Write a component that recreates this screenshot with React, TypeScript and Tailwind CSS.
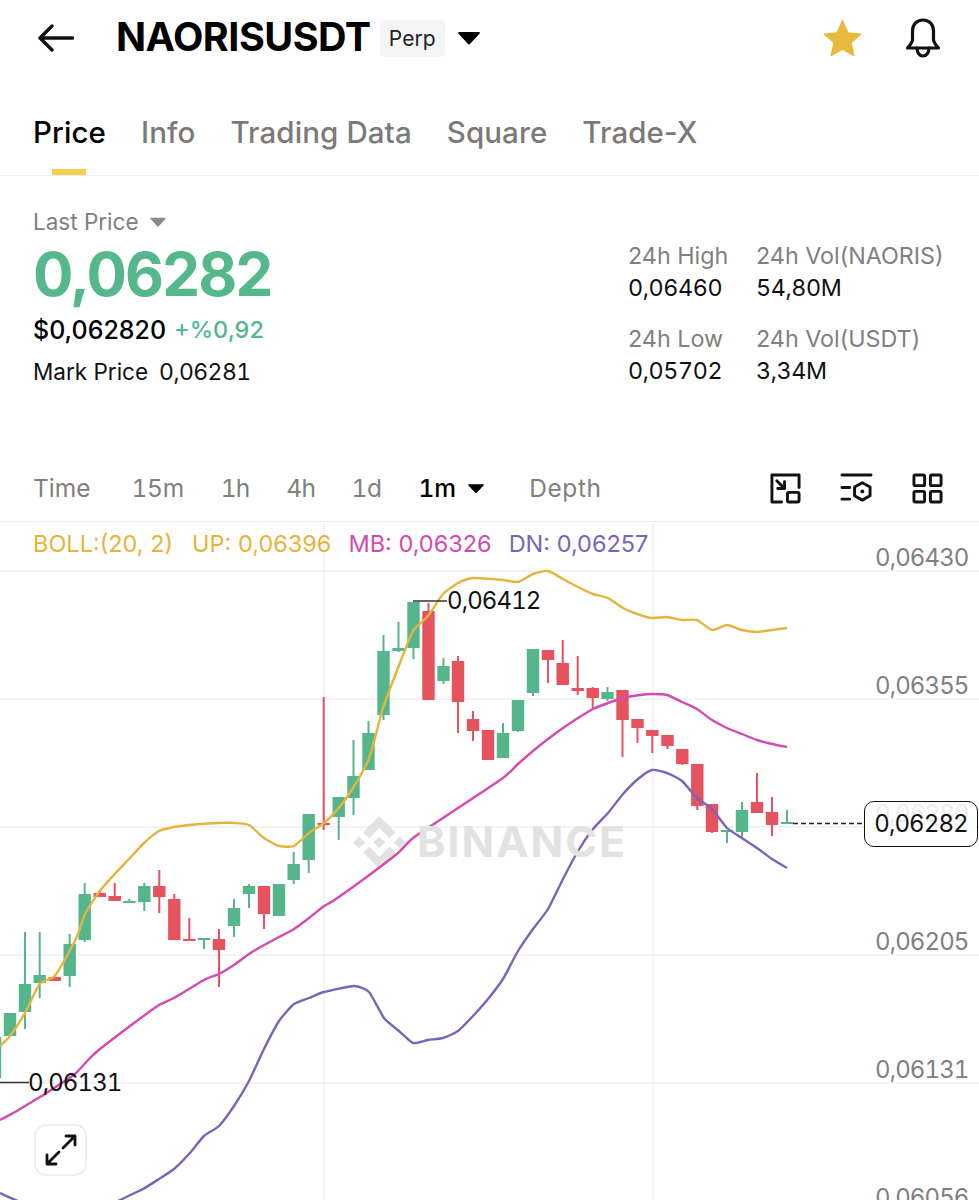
import React from 'react'

// ─── Chart data (page-pixel coordinates, the svg viewBox starts at y=521) ─────
type Candle = [x: number, up: boolean, wickTop: number, wickBottom: number, bodyTop: number, bodyBottom: number]

const candles: Candle[] = [
  [-5, true, 1036, 1077, 1036, 1077],
  [10, true, 1012, 1035, 1012, 1035],
  [25, true, 931, 1028, 983, 1011],
  [39.7, true, 931, 997, 974, 982],
  [54.7, false, 976, 980, 976, 980],
  [69.7, true, 933, 986, 943, 975],
  [84.7, true, 882, 941, 893, 939],
  [99.7, false, 890, 896, 892, 896],
  [114.7, false, 882, 900, 895, 900],
  [129.3, true, 898, 902, 900, 902],
  [144.3, true, 882, 910, 885, 901],
  [159.3, false, 869, 912, 885, 896],
  [174.3, false, 893, 939, 898, 939],
  [189.3, false, 917, 940, 938, 940],
  [204, true, 937, 948, 937, 939],
  [219, false, 928, 986, 938, 949],
  [234, true, 898, 936, 907, 925],
  [249, true, 883, 907, 885, 893],
  [264, false, 885, 928, 885, 913],
  [279, true, 883, 915, 883, 915],
  [293.7, true, 851, 883, 863, 879],
  [308.7, true, 813, 872, 813, 859],
  [323.7, false, 696, 829, 822, 824],
  [338.7, true, 796, 839, 796, 816],
  [353.5, true, 739, 814, 775, 797],
  [368.5, true, 720, 769, 732, 769],
  [383.5, true, 634, 719, 650, 714],
  [398.5, true, 621, 651, 647, 650],
  [413.5, true, 601, 658, 601, 647],
  [428.5, false, 602, 699, 610, 699],
  [443.5, true, 657, 683, 665, 680],
  [458, false, 655, 732, 660, 701],
  [473, false, 710, 740, 718, 730],
  [488, false, 729, 759, 729, 759],
  [503, true, 722, 757, 732, 757],
  [518, true, 699, 731, 699, 730],
  [533, true, 648, 695, 648, 692],
  [548, false, 649, 682, 649, 659],
  [562.7, false, 639, 684, 662, 684],
  [577.7, false, 655, 694, 687, 690],
  [592.7, false, 686, 708, 687, 697],
  [607.5, true, 686, 700, 691, 698],
  [622.5, false, 689, 756, 689, 719],
  [637.5, false, 718, 742, 718, 727],
  [652.3, false, 729, 752, 729, 735],
  [667.5, false, 734, 748, 734, 745],
  [682.3, false, 748, 764, 748, 763],
  [697.3, false, 763, 809, 763, 805],
  [712, false, 803, 832, 803, 831],
  [727, true, 829, 842, 829, 831],
  [742, true, 801, 837, 809, 831],
  [757, false, 772, 812, 801, 812],
  [772, false, 796, 835, 811, 824],
  [787, true, 809, 823, 821, 823],
]

const upperBand =
  '0,1045 10,1035 25,1012 39.7,983 54.7,975 69.7,950 78,933 85,913 99.7,890 114.7,873 129,858 144,842 159,830 174,826 189,824 219,822 234,822 249,824 264,837 279,845 294,845 309,832 324,822 338,808 353,787 368,760 375,737 383,707 398,667 413,630 428,615 443,593 458,582 473,577 503,579 518,581 533,573 548,570 563,578 578,586 593,593 608,597 623,607 640,614 652,617 667,616 682,619 697,619 712,629 727,624 742,629 757,631 772,629 787,627'
const middleBand =
  '0,1119 15,1111 30,1102 45,1093 60,1083 75,1073 90,1057 100,1048 130,1025 159,1004 174,997 204,979 219,973 234,964 249,953 264,944 279,936 294,928 309,917 324,905 333,900 368,875 398,852 413,837 443,817 458,807 503,777 518,763 533,750 548,738 563,727 578,717 593,708 608,702 623,697 640,694 652,693 667,694 682,701 697,708 712,719 727,727 742,733 757,739 772,743 787,746'
const lowerBand =
  '0,1192 18,1200 60,1215 100,1210 118,1200 143,1188 159,1178 174,1168 189,1153 204,1135 219,1125 234,1105 249,1080 264,1048 279,1020 294,1003 309,997 324,991 354,985 369,991 384,1017 399,1030 413,1042 428,1039 443,1037 458,1030 473,1015 488,998 503,978 518,950 533,928 548,908 563,878 578,850 593,828 608,812 623,793 638,778 652,769 667,772 682,780 697,797 712,808 727,827 742,837 757,847 772,858 787,867'

const axisLabels = [
  { label: '0,06430', y: 558 },
  { label: '0,06355', y: 686 },
  { label: '0,06280', y: 814 },
  { label: '0,06205', y: 942 },
  { label: '0,06131', y: 1070 },
  { label: '0,06056', y: 1198 },
]

// Catmull-Rom through the sampled points (tight tension), so the bands aren't hard polygons
function smoothPath(points: string) {
  const p = points.split(' ').map((s) => s.split(',').map(Number))
  let d = `M${p[0][0]} ${p[0][1]}`
  for (let i = 0; i < p.length - 1; i++) {
    const a = p[Math.max(i - 1, 0)]
    const b = p[i]
    const c = p[i + 1]
    const e = p[Math.min(i + 2, p.length - 1)]
    const c1x = b[0] + (c[0] - a[0]) / 10
    const c1y = b[1] + (c[1] - a[1]) / 10
    const c2x = c[0] - (e[0] - b[0]) / 10
    const c2y = c[1] - (e[1] - b[1]) / 10
    d += `C${c1x} ${c1y} ${c2x} ${c2y} ${c[0]} ${c[1]}`
  }
  return d
}

function CaretDown({ className }: { className: string }) {
  return (
    <svg viewBox="0 0 22 14" className={className}>
      <path d="M1 1h20a1 1 0 0 1 .7 1.6l-10 10.6a1 1 0 0 1-1.4 0L.3 2.6A1 1 0 0 1 1 1z" fill="currentColor" />
    </svg>
  )
}

function Header() {
  return (
    <div className="flex h-[76px] items-center pl-[38px] pr-[37px]">
      <svg viewBox="0 0 36 28" className="h-[28px] w-[36px]" fill="none" stroke="#111" strokeWidth="3.4" strokeLinecap="round" strokeLinejoin="round">
        <path d="M34.5 14H2M14 2 2 14l12 12" />
      </svg>
      <span className="ml-[42px] text-[39.5px] leading-none font-bold tracking-[-0.5px] text-black">NAORISUSDT</span>
      <span className="ml-[9px] flex h-[37px] w-[65px] items-center justify-center rounded-[4px] bg-[#f5f5f5] pt-[2px] text-[21px] text-[#222]">Perp</span>
      <CaretDown className="ml-[13px] h-[14px] w-[22px] text-black" />
      <svg viewBox="0 0 24 24" className="ml-auto h-[41px] w-[41px]">
        <path d="M12 1.5l3.1 7.2 7.6.7-5.8 5.1 1.8 7.6L12 18.2l-6.7 3.9 1.8-7.6L1.300 9.400l7.600-.7z" fill="#e9b93e" stroke="#e9b93e" strokeWidth="0.8" strokeLinejoin="round" />
      </svg>
      <svg viewBox="0 0 38 40" className="ml-[41px] h-[40px] w-[38px]" fill="none" stroke="#111" strokeWidth="3.2" strokeLinejoin="round" strokeLinecap="round">
        <path d="M19 2c-6.500 0-10.500 4.800-10.500 11v8.500c0 3-2 5-5 8.500h31c-3-3.500-5-5.500-5-8.500V13C29.500 6.800 25.500 2 19 2z" />
        <path d="M13 30c0 4.500 2.500 8 6 8s6-3.500 6-8" />
      </svg>
    </div>
  )
}

function Tabs() {
  const tabs = ['Price', 'Info', 'Trading Data', 'Square', 'Trade-X']
  return (
    <div className="flex h-[100px] gap-[35px] border-b border-[#eeeeee] pl-[33px]">
      {tabs.map((tab, i) => (
        <div key={tab} className="relative pt-[35px]">
          <span className={`text-[29.5px] leading-[42px] font-medium tracking-[0.1px] ${i === 0 ? 'text-black' : 'text-[#7a7a7a]'}`}>{tab}</span>
          {i === 0 && <div className="absolute bottom-0 left-[19px] h-[6px] w-[34px] bg-[#f5d04e]" />}
        </div>
      ))}
    </div>
  )
}

function StatBlock({ label, value }: { label: string; value: string }) {
  return (
    <div>
      <div className="text-[23.3px] leading-[32px] text-[#808080]">{label}</div>
      <div className="text-[23.3px] leading-[32px] tracking-[-0.4px] text-[#111] tabular-nums">{value}</div>
    </div>
  )
}

function PriceSummary() {
  return (
    <div className="flex h-[280px] pl-[33px] pr-[33px] pt-[30px]">
      <div className="w-[595px]">
        <div className="flex items-center text-[22.5px] leading-[32px] text-[#808080]">
          Last Price
          <CaretDown className="ml-[11px] h-[10px] w-[16px] text-[#8a8a8a]" />
        </div>
        <div className="mt-[2px] text-[60px] leading-[68px] font-bold tracking-[-1.8px] text-[#55b88b]">0,06282</div>
        <div className="mt-[3px] flex items-center gap-[8px] leading-[38px]">
          <span className="text-[25px] font-medium text-black">$0,062820</span>
          <span className="text-[23.5px] font-medium text-[#55b88b]">+%0,92</span>
        </div>
        <div className="mt-[7px] flex gap-[11px] leading-[32px] text-[#111]">
          <span className="text-[22.5px]">Mark Price</span>
          <span className="text-[23px] tracking-[-0.6px] tabular-nums">0,06281</span>
        </div>
      </div>
      <div className="mt-[34px] grid grid-cols-[128px_1fr] content-start gap-y-[19px]">
        <StatBlock label="24h High" value="0,06460" />
        <StatBlock label="24h Vol(NAORIS)" value="54,80M" />
        <StatBlock label="24h Low" value="0,05702" />
        <StatBlock label="24h Vol(USDT)" value="3,34M" />
      </div>
    </div>
  )
}

function Toolbar() {
  return (
    <div className="flex h-[65px] items-center pl-[33px] pr-[36px] text-[24.5px] text-[#808080]">
      <span>Time</span>
      <span className="ml-[41px] tracking-[-0.3px] tabular-nums">15m</span>
      <span className="ml-[37px] tracking-[-1px] tabular-nums">1h</span>
      <span className="ml-[37px] tracking-[-0.5px] tabular-nums">4h</span>
      <span className="ml-[36px] tracking-[-0.5px] tabular-nums">1d</span>
      <span className="ml-[37px] font-medium text-black tabular-nums">1m</span>
      <CaretDown className="ml-[12px] h-[11px] w-[16px] text-black" />
      <span className="ml-[45px] tracking-[0.6px]">Depth</span>
      <svg viewBox="0 0 32 32" className="ml-auto h-[31px] w-[31px]" fill="none" stroke="#111" strokeWidth="3" strokeLinecap="round" strokeLinejoin="round">
        <path d="M12 30H2V2h28v13" />
        <path d="M7 8l8 8M15 9v7H8" />
        <rect x="18" y="20" width="12" height="10" rx="1.500" />
      </svg>
      <svg viewBox="0 0 34 32" className="ml-[39px] h-[31px] w-[33px]" fill="none" stroke="#111" strokeWidth="3" strokeLinecap="round" strokeLinejoin="round">
        <path d="M2 2h30M2 15h8M2 27h8" />
        <path d="M23 10l8 4.500v9L23 28l-8-4.500v-9z" />
        <circle cx="23" cy="19" r="2" fill="#111" stroke="none" />
      </svg>
      <svg viewBox="0 0 32 32" className="ml-[39px] h-[31px] w-[31px]" fill="none" stroke="#111" strokeWidth="3" strokeLinejoin="round">
        <rect x="2" y="2" width="11" height="11" rx="1.500" />
        <rect x="19" y="2" width="11" height="11" rx="1.500" />
        <rect x="2" y="19" width="11" height="11" rx="1.500" />
        <rect x="19" y="19" width="11" height="11" rx="1.500" />
      </svg>
    </div>
  )
}

function ChartSvg() {
  return (
    <svg viewBox="0 521 979 679" className="absolute inset-0 h-[679px] w-[979px]">
      {[570, 698, 826, 954, 1082].map((y) => (
        <line key={y} x1="0" x2="979" y1={y} y2={y} stroke="#efefef" strokeWidth="1.500" />
      ))}
      {[324, 653].map((x) => (
        <line key={x} x1={x} x2={x} y1="522" y2="1200" stroke="#f0f0f0" strokeWidth="1.500" />
      ))}
      {/* Watermark logo */}
      <g transform="translate(353 815) scale(2.200)">
        <path
          fill="#e2e2e2"
          d="M16.624 13.9202l2.7175 2.7154-7.353 7.353-7.353-7.352 2.7175-2.7164 4.6355 4.6595 4.6356-4.6595zm4.6366-4.6366L24 12l-2.7154 2.7164L18.5682 12l2.6924-2.7164zm-9.272.001l2.7163 2.6914-2.7164 2.7174v-.001L9.2721 12l2.7164-2.7154zm-9.2722-.001L5.4088 12l-2.6914 2.6924L0 12l2.7164-2.7164zM11.9885.0115l7.353 7.329-2.7174 2.7154-4.6356-4.6356-4.6355 4.6595-2.7174-2.7154 7.353-7.353z"
        />
      </g>
      {candles.map(([x, up, wickTop, wickBottom, bodyTop, bodyBottom]) => {
        const color = up ? '#56b68b' : '#e7525f'
        return (
          <g key={x} fill={color}>
            <rect x={x - 1} y={wickTop} width="2" height={wickBottom - wickTop} />
            <rect x={x - 6.2} y={bodyTop} width="12.400" height={bodyBottom - bodyTop} />
          </g>
        )
      })}
      <path d={smoothPath(upperBand)} fill="none" stroke="#e6b33d" strokeWidth="2.400" />
      <path d={smoothPath(middleBand)} fill="none" stroke="#d34bb0" strokeWidth="2.400" />
      <path d={smoothPath(lowerBand)} fill="none" stroke="#7b63b9" strokeWidth="2.400" />
      {/* High / low leaders and last price */}
      <line x1="413" x2="447" y1="600" y2="600" stroke="#333" strokeWidth="1.500" />
      <line x1="0" x2="29" y1="1081.500" y2="1081.500" stroke="#333" strokeWidth="1.500" />
      <line x1="793" x2="864" y1="822.500" y2="822.500" stroke="#222" strokeWidth="1.500" strokeDasharray="5 3" />
    </svg>
  )
}

function Chart() {
  return (
    <div className="relative h-[679px] border-t border-[#f0f0f0]">
      <ChartSvg />
      <div className="absolute left-[417px] top-[293px] text-[43px] leading-[52px] font-bold tracking-[2px] text-[#e2e2e2]">BINANCE</div>

      <div className="relative flex h-[44px] items-center pl-[33px] text-[23.5px]">
        <span className="text-[#e6b33d]">BOLL:(20, 2)</span>
        <span className="ml-[19px] text-[#e6b33d]">UP: 0,06396</span>
        <span className="ml-[17px] text-[#d34bb0]">MB: 0,06326</span>
        <span className="ml-[17px] text-[#7b63b9]">DN: 0,06257</span>
      </div>

      {axisLabels.map(({ label, y }) => (
        <div key={y} className="absolute left-[875px] text-[24px] leading-[28px] tracking-[-0.9px] text-[#808080] tabular-nums" style={{ top: y - 536 }}>
          {label}
        </div>
      ))}

      <div className="absolute left-[447px] top-[65px] text-[24px] leading-[28px] tracking-[-0.9px] text-[#111] tabular-nums">0,06412</div>
      <div className="absolute left-[28px] top-[547px] text-[24px] leading-[28px] tracking-[-0.9px] text-[#111] tabular-nums">0,06131</div>
      <div className="absolute left-[864px] top-[279px] flex h-[46px] w-[114px] items-center justify-center rounded-[10px] border border-[#111] bg-white/85 text-[24px] tracking-[-0.9px] text-[#111] tabular-nums">
        0,06282
      </div>

      <div className="absolute left-[34px] top-[602px] flex h-[52px] w-[53px] items-center justify-center rounded-[12px] border-2 border-[#efefef] bg-white">
        <svg viewBox="0 0 32 32" className="h-[32px] w-[32px]" fill="none" stroke="#111" strokeWidth="2.800" strokeLinecap="round" strokeLinejoin="round">
          <path d="M18 14 30 2M21 2h9v9M14 18 2 30M2 21v9h9" />
        </svg>
      </div>
    </div>
  )
}

export default function App() {
  return (
    <div className="h-[1200px] w-[979px] overflow-hidden bg-white font-['Inter','Liberation_Sans',sans-serif]">
      <Header />
      <Tabs />
      <PriceSummary />
      <Toolbar />
      <Chart />
    </div>
  )
}
